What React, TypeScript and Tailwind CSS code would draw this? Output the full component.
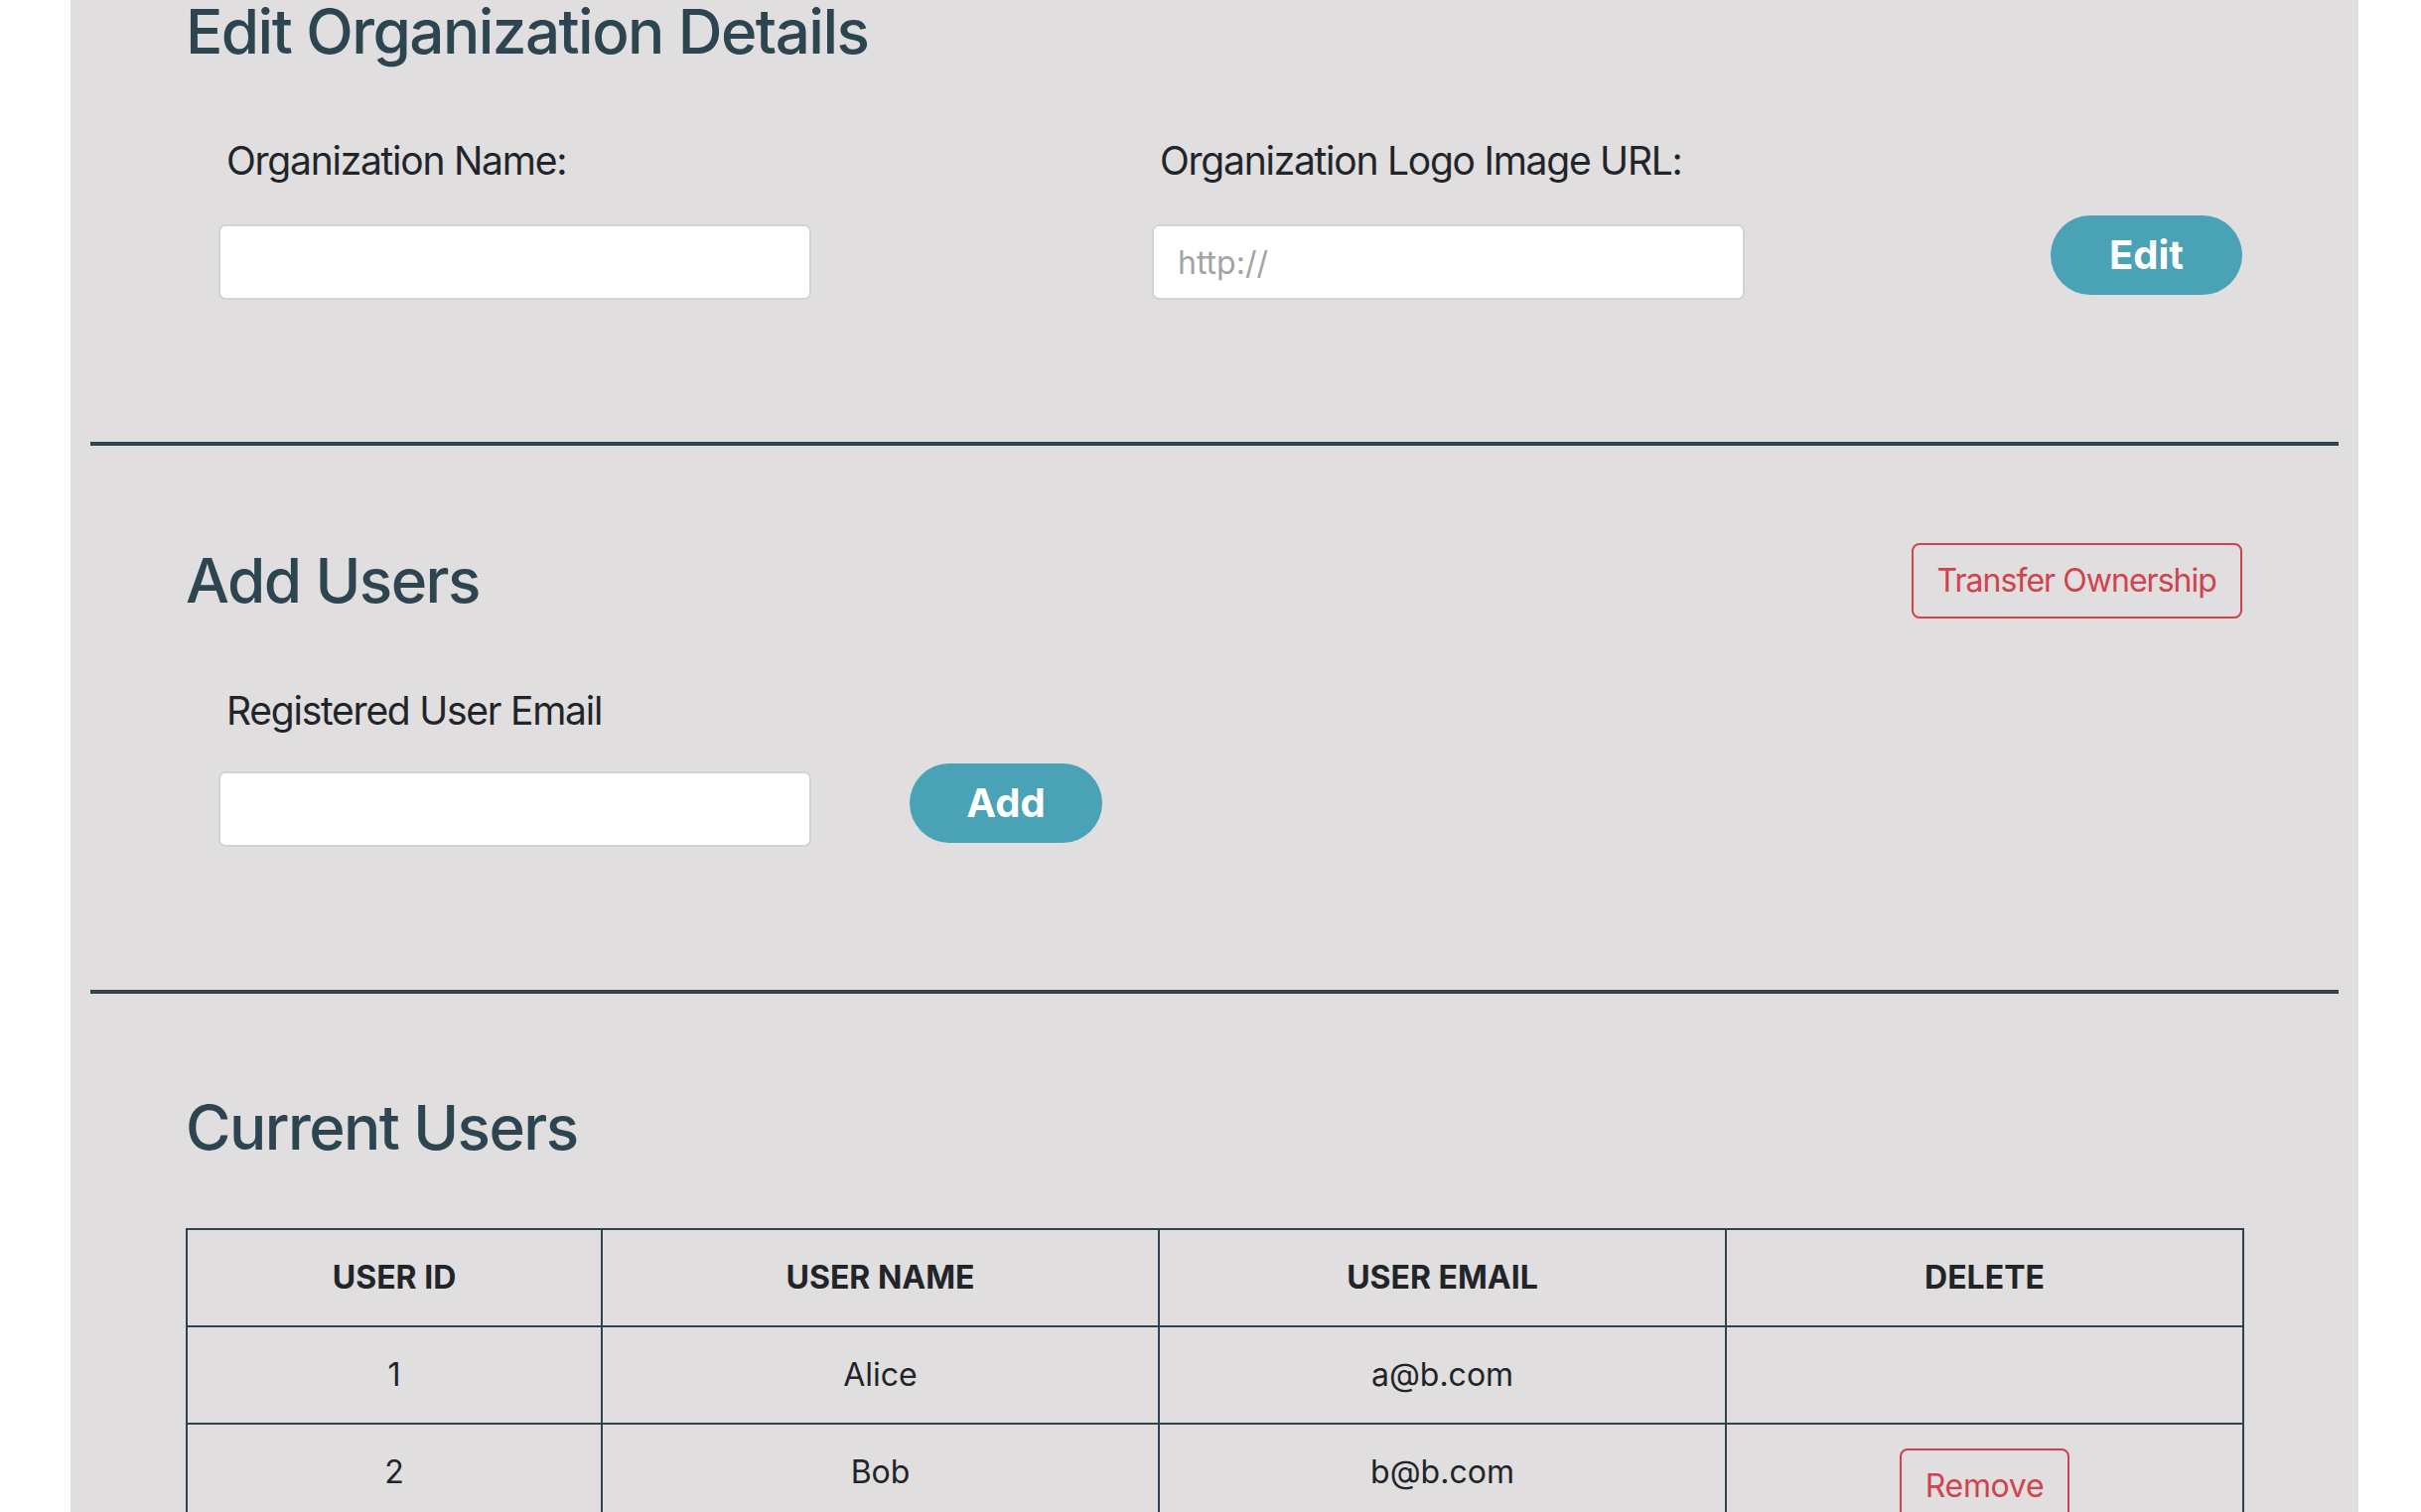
import type React from "react"

const users = [
  { id: 1, name: "Alice", email: "a@b.com", owner: true },
  { id: 2, name: "Bob", email: "b@b.com", owner: false },
]

const headers = ["USER ID", "USER NAME", "USER EMAIL", "DELETE"]

const Divider: React.FC<{ className?: string }> = ({ className = "" }) => (
  <div className={`mx-[20px] h-[4px] bg-[#2d4550] ${className}`} />
)

const App: React.FC = () => {
  return (
    <div className="min-h-screen bg-white pl-[71px] pr-[63px] font-['Inter','Noto_Sans',sans-serif] text-[#212529]">
      <div className="min-h-screen overflow-hidden bg-[#e0dedf]">
        {/* Edit organization */}
        <section className="pl-[116px] pr-[117px]">
          <h2 className="-mt-[4px] text-[62px] leading-[72px] font-medium tracking-[-0.025em] text-[#2d4550]">
            Edit Organization Details
          </h2>
          <div className="mt-[70px] flex items-start">
            <div className="w-[940px] pl-[33px]">
              <label className="block pl-[8px] text-[39px] leading-[48px] tracking-[-0.032em]">
                Organization Name:
              </label>
              <input
                type="text"
                className="mt-[40px] block h-[76px] w-[597px] rounded-[7px] border-2 border-[#ced4da] bg-white px-[24px] text-[32px] outline-none"
              />
            </div>
            <div className="pl-[33px]">
              <label className="block pl-[8px] text-[39px] leading-[48px] tracking-[-0.032em]">
                Organization Logo Image URL:
              </label>
              <input
                type="text"
                placeholder="http://"
                className="mt-[40px] block h-[76px] w-[597px] rounded-[7px] border-2 border-[#ced4da] bg-white px-[24px] text-[32px] outline-none placeholder:text-[#a3a3a3]"
              />
            </div>
            <button className="ml-auto mt-[79px] h-[80px] w-[193px] rounded-full bg-[#4aa2b6] text-[40px] font-bold text-white">
              Edit
            </button>
          </div>
        </section>

        <Divider className="mt-[143px]" />

        {/* Add users */}
        <section className="pl-[116px] pr-[117px]">
          <div className="mt-[98px] flex items-center justify-between">
            <h2 className="text-[62px] leading-[72px] font-medium tracking-[-0.025em] text-[#2d4550]">Add Users</h2>
            <button className="h-[76px] rounded-[8px] border-2 border-[#d0434c] px-[24px] text-[32px] leading-[48px] tracking-[-0.03em] text-[#d0434c]">
              Transfer Ownership
            </button>
          </div>
          <div className="mt-[69px] pl-[33px]">
            <label className="block pl-[8px] text-[39px] leading-[48px] tracking-[-0.032em]">
              Registered User Email
            </label>
            <div className="mt-[29px] flex items-start">
              <input
                type="email"
                className="mt-[8px] block h-[76px] w-[597px] rounded-[7px] border-2 border-[#ced4da] bg-white px-[24px] text-[32px] outline-none"
              />
              <button className="ml-[99px] h-[80px] w-[194px] rounded-full bg-[#4aa2b6] text-[40px] font-bold text-white">
                Add
              </button>
            </div>
          </div>
        </section>

        <Divider className="mt-[144px]" />

        {/* Current users */}
        <section className="pl-[116px] pr-[117px]">
          <h2 className="mt-[99px] text-[62px] leading-[72px] font-medium tracking-[-0.025em] text-[#2d4550]">
            Current Users
          </h2>
          <table className="mt-[65px] w-full table-fixed border-collapse border-2 border-[#2d4550] text-center text-[32px] leading-[48px]">
            <colgroup>
              <col className="w-[418px]" />
              <col className="w-[561px]" />
              <col className="w-[571px]" />
              <col className="w-[521px]" />
            </colgroup>
            <thead>
              <tr>
                {headers.map((h) => (
                  <th key={h} className="border-2 border-[#2d4550] py-[24px] align-middle font-bold">
                    {h}
                  </th>
                ))}
              </tr>
            </thead>
            <tbody>
              {users.map((u) => (
                <tr key={u.id}>
                  <td className="border-2 border-[#2d4550] py-[24px] align-top">{u.id}</td>
                  <td className="border-2 border-[#2d4550] py-[24px] align-top">{u.name}</td>
                  <td className="border-2 border-[#2d4550] py-[24px] align-top">{u.email}</td>
                  <td className="border-2 border-[#2d4550] py-[24px] align-top">
                    {!u.owner && (
                      <button className="h-[76px] rounded-[8px] border-2 border-[#d0434c] px-[24px] text-[32px] leading-[48px] tracking-[-0.01em] text-[#d0434c]">
                        Remove
                      </button>
                    )}
                  </td>
                </tr>
              ))}
            </tbody>
          </table>
        </section>
      </div>
    </div>
  )
}

export default App
